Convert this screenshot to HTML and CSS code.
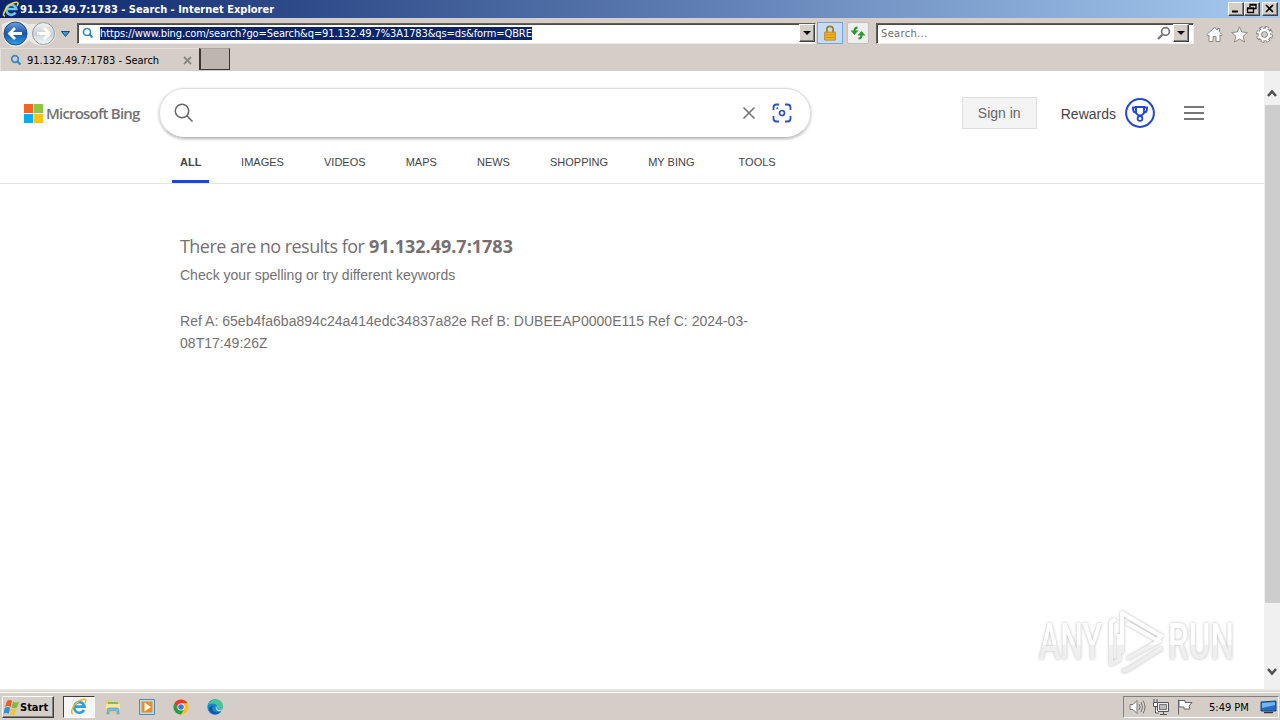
FILE: index.html
```html
<!DOCTYPE html>
<html lang="en">
  <head>
    <meta charset="UTF-8" />
    <title>91.132.49.7:1783 - Search</title>
    <link rel="stylesheet" href="styles.css">
  </head>
  <body>
    <!-- Title bar -->
    <div class="titlebar">
      <svg class="ie-logo" width="18" height="17" viewBox="0 0 18 17">
        <path d="M13.5 11.5a5 5 0 1 1 .7-3.5H5" fill="none" stroke="#6bc5f5" stroke-width="2.7"/>
        <path d="M3 15C-1 15 4 5 11 2c5-2 6 0 4 3" fill="none" stroke="#f2d33c" stroke-width="1.6"/>
      </svg>
      <div class="window-title">91.132.49.7:1783 - Search - Internet Explorer</div>
      <div class="window-buttons">
        <div class="win-button"><svg width="13" height="11"><path d="M3 8.500h6" stroke="#000" stroke-width="2"/></svg></div>
        <div class="win-button"><svg width="13" height="11"><path d="M5 4V1.500h6v4H9M5 2h6M2.500 5.500h6v4h-6zM2 5h7" fill="none" stroke="#000" stroke-width="1.300"/></svg></div>
        <div class="win-button close"><svg width="13" height="11"><path d="M3 2l7 7M10 2L3 9" stroke="#000" stroke-width="1.700"/></svg></div>
      </div>
    </div>

    <!-- Address row -->
    <div class="toolbar">
      <svg class="nav-buttons" width="70" height="27" viewBox="0 0 70 27">
        <defs>
          <linearGradient id="blue" x2="0" y2="1"><stop stop-color="#6e9fd6"/><stop offset=".5" stop-color="#1c55ab"/><stop offset="1" stop-color="#2fa0e4"/></linearGradient>
          <linearGradient id="pale" x2="0" y2="1"><stop stop-color="#f2f3f4"/><stop offset=".5" stop-color="#cbd1d6"/><stop offset="1" stop-color="#f3fafc"/></linearGradient>
        </defs>
        <path d="M2 4Q15-3 28 4h17q10 1 11 10-1 10-12 12-11-1-15-6Q24 27 14 27 1 24 2 4" fill="#ebe9e6"/>
        <circle cx="15.500" cy="13.500" r="11.500" fill="url(#blue)" stroke="#254d82"/>
        <path d="M22 13.500H10M15 8l-5.500 5.500 5.500 5.500" fill="none" stroke="#fff" stroke-width="2.800"/>
        <circle cx="43.500" cy="13.500" r="11" fill="url(#pale)" stroke="#929aa3"/>
        <path d="M37 13.500h12M44 8l5.500 5.500-5.500 5.500" fill="none" stroke="#fff" stroke-width="2.800"/>
        <path d="M61.500 11.500h8l-4 5z" fill="#3a9bd8" stroke="#1d4870"/>
      </svg>
      <div class="address">
        <svg width="13" height="13" viewBox="0 0 13 13"><circle cx="5" cy="5" r="3.500" fill="none" stroke="#3589c6" stroke-width="1.700"/><path d="M7.500 7.500l3 3" stroke="#3589c6" stroke-width="2.200"/></svg>
        <span class="url">https://www.bing.com/search?go=Search&amp;q=91.132.49.7%3A1783&amp;qs=ds&amp;form=QBRE</span>
        <div class="drop"></div>
      </div>
      <div class="lock">
        <svg width="16" height="16" viewBox="0 0 16 18"><path d="M4.500 9V4.500a3.500 3 0 0 1 7 0V9" fill="none" stroke="#a47c24" stroke-width="2"/><path d="M2 8h12v9H2z" fill="#f1b51f" stroke="#ba8319"/><path d="M3 11h10M3 14h10" stroke="#c88a13"/></svg>
      </div>
      <div class="refresh">
        <svg width="16" height="16" viewBox="0 0 16 16"><path d="M7.500 2.500Q4.500 2.500 4.500 6M8.500 13.500q3 0 3-3.500" fill="none" stroke="#299a31" stroke-width="2"/><path d="M.5 5.500h8l-4 4.500zM7.500 10.500h8l-4-4.500z" fill="#299a31"/></svg>
      </div>
      <div class="search-field">
        <span class="placeholder">Search...</span>
        <svg width="14" height="14" viewBox="0 0 14 14"><circle cx="8.500" cy="5.500" r="3.900" fill="none" stroke="#777" stroke-width="1.700"/><path d="M5.500 8.500L1 13" stroke="#777" stroke-width="2.300"/></svg>
        <div class="drop"></div>
      </div>
      <div class="tool-icons">
        <svg width="17" height="17" viewBox="0 0 17 17"><path d="M.8 8.500L8.500 1.500 11.500 4V2.500h2V6l2.700 2.500-1.200 1.500-1-1v6.500h-4v-5h-3v5H3V9L2 10z" fill="#fff" stroke="#8e8a85"/></svg>
        <svg width="17" height="17" viewBox="0 0 17 17"><path d="M8.500.8l2.200 5.200 5.700.5-4.300 3.800 1.400 5.700-5-3-5 3 1.400-5.700L.6 6.500 6.300 6z" fill="#fff" stroke="#8e8a85"/></svg>
        <svg width="17" height="17" viewBox="0 0 17 17"><circle cx="8.500" cy="8.500" r="6.800" fill="none" stroke="#85817c" stroke-width="3.400" stroke-dasharray="3.500 1.840"/><circle cx="8.500" cy="8.500" r="4.600" fill="none" stroke="#85817c" stroke-width="4.400"/><circle cx="8.500" cy="8.500" r="4.600" fill="none" stroke="#fff" stroke-width="2.600"/><circle cx="8.500" cy="8.500" r="6.400" fill="none" stroke="#fff" stroke-width="2.400" stroke-dasharray="1.900 3.127" stroke-dashoffset="-.7"/></svg>
      </div>
    </div>

    <!-- Tabs -->
    <div class="tabs">
      <div class="tab">
        <svg width="13" height="13" viewBox="0 0 13 13"><circle cx="5" cy="5" r="3.300" fill="none" stroke="#3589c6" stroke-width="1.700"/><path d="M7.500 7.500l3 3" stroke="#3589c6" stroke-width="2.200"/></svg>
        <span class="tab-title">91.132.49.7:1783 - Search</span>
        <svg width="9" height="9" viewBox="0 0 9 9"><path d="M1 1l7 7M8 1L1 8" stroke="#8b8783" stroke-width="1.800"/></svg>
      </div>
      <div class="new-tab"></div>
    </div>

    <!-- Page -->
    <div class="viewport">
      <div class="page">
        <div class="header">
          <div class="logo">
            <div class="squares"><i></i><i></i><i></i><i></i></div>
            <span class="logo-text">Microsoft Bing</span>
          </div>
          <div class="searchbox">
            <svg width="20" height="20" viewBox="0 0 20 20"><circle cx="8" cy="8" r="6.700" fill="none" stroke="#666" stroke-width="1.500"/><path d="M12.800 12.800L18.500 18.500" stroke="#666" stroke-width="1.600"/></svg>
            <svg class="clear" width="14" height="14" viewBox="0 0 14 14"><path d="M1.500 1.500l11 11M12.500 1.500l-11 11" stroke="#777" stroke-width="1.700"/></svg>
            <svg class="lens" width="20" height="20" viewBox="0 0 20 20"><path d="M1.500 7V4.500q0-3 3-3H7M13 1.500h2.500q3 0 3 3V7M18.500 13v2.500q0 3-3 3H13M7 18.500H4.500q-3 0-3-3V13" fill="none" stroke="#2b50bd" stroke-width="1.800"/><circle cx="10" cy="10" r="2.500" fill="none" stroke="#2b50bd" stroke-width="1.700"/><circle cx="5.300" cy="5.300" r="1" fill="#2b50bd"/></svg>
          </div>
          <div class="account">
            <div class="signin">Sign in</div>
            <span class="rewards">Rewards</span>
            <svg width="30" height="30" viewBox="0 0 30 30"><circle cx="15" cy="15" r="13.900" fill="#fff" stroke="#2347cf" stroke-width="2"/><path d="M11 9h8v4.500a4 4 0 0 1-8 0zM11 9.500H8v1.500q0 3.500 4 4M19 9.500h3v1.500q0 3.500-4 4M13 17l2 1.500 2-1.500" fill="none" stroke="#2347cf" stroke-width="1.900"/><circle cx="15" cy="20.500" r="2.400" fill="#fff" stroke="#2347cf" stroke-width="1.800"/></svg>
            <div class="burger"></div>
          </div>
        </div>
        <div class="scopes">
          <span class="scope active">ALL</span>
          <span class="scope">IMAGES</span>
          <span class="scope">VIDEOS</span>
          <span class="scope">MAPS</span>
          <span class="scope">NEWS</span>
          <span class="scope">SHOPPING</span>
          <span class="scope">MY BING</span>
          <span class="scope tools">TOOLS</span>
        </div>
        <div class="results">
          <h1><span class="no-results">There are no results for</span> <strong>91.132.49.7:1783</strong></h1>
          <p>Check your spelling or try different keywords</p>
          <p class="ref">Ref A: 65eb4fa6ba894c24a414edc34837a82e Ref B: DUBEEAP0000E115 Ref C: 2024-03-<br>08T17:49:26Z</p>
        </div>
      </div>
      <div class="scrollbar">
        <svg width="16" height="34"><path d="M4 25l4-4.500 4 4.500" fill="none" stroke="#505050" stroke-width="2.500"/></svg>
        <div class="thumb"></div>
        <svg class="down" width="16" height="34"><path d="M4 14l4 4.500 4-4.500" fill="none" stroke="#505050" stroke-width="2.500"/></svg>
      </div>
      <svg class="watermark" width="240" height="76" viewBox="0 0 240 76">
        <defs>
          <linearGradient id="mark" gradientUnits="userSpaceOnUse" x1="0" y1="0" x2="0" y2="68"><stop offset=".52" stop-color="#fff"/><stop offset=".53" stop-color="#f0f0f0"/><stop offset="1" stop-color="#ececec"/></linearGradient>
        </defs>
        <g class="mark-text">
          <text x="3" y="50" textLength="63" lengthAdjust="spacingAndGlyphs">ANY</text>
          <text x="132" y="50" textLength="66" lengthAdjust="spacingAndGlyphs">RUN</text>
        </g>
        <g class="mark-lines">
          <path d="M80 10l-5 3v42l8-4V25M86 44V4l39 23-4 4-30-17M91 50l34-19M86 62l5-1 35-22"/>
        </g>
      </svg>
    </div>

    <!-- Taskbar -->
    <div class="taskbar">
      <div class="start">
        <svg width="18" height="17" viewBox="0 0 18 17"><path d="M4 2q3-2 5 0L7.500 8q-3-2-5.500 0z" fill="#ea5a2a"/><path d="M10 2.500q3 2 6 0l-2 6q-3 1.500-5.500 0z" fill="#83ba38"/><path d="M1.700 9q3-2 5.500 0l-1.500 6q-3-2-5.200 0z" fill="#378fd6"/><path d="M8.200 9.500q3 2 5.500 0l-2 6q-3 1-5 0z" fill="#f5c430"/></svg>
        <span>Start</span>
      </div>
      <div class="task active">
        <svg width="18" height="18" viewBox="0 0 18 18"><path d="M14 12a5.300 5.300 0 1 1 .6-3.400H5" fill="none" stroke="#2e9ee0" stroke-width="2.600"/><path d="M3 16C-1 15 4 5 11 2c5-2 6 0 4 3" fill="none" stroke="#e7b928" stroke-width="1.500"/></svg>
      </div>
      <svg class="task-icon" width="18" height="18" viewBox="0 0 18 18"><path d="M2 4l1-2h5l1 2h6v11H2z" fill="#edcf68"/><path d="M4 4h10v3H4z" fill="#78bd68"/><path d="M2 6h14v8H2z" fill="#f8e49a"/><path d="M3 16v-4q0-2 2-2h8q2 0 2 2v4h-2v-3H5v3z" fill="#75bce5" stroke="#4b9bc8" stroke-width=".6"/></svg>
      <svg class="task-icon" width="18" height="18" viewBox="0 0 18 18"><path d="M1.500 1.500h15v15h-15z" fill="#b8dcf4" stroke="#528bb7"/><path d="M3.500 3.500h11v11h-11z" fill="#f18b1b"/><path d="M6.500 4.500l6.500 4.500-6.500 4.500z" fill="#fff"/></svg>
      <svg class="task-icon" width="18" height="18" viewBox="0 0 18 18"><circle cx="9" cy="9" r="7.500" fill="#fbc116"/><path d="M2.500 5.250A7.500 7.500 0 0 1 15.500 5.250H9L5.800 11z" fill="#e33b2e"/><path d="M2.500 5.250A7.500 7.500 0 0 0 9 16.500l3.200-5.600L9 9l-3.200 1.900z" fill="#289b48"/><circle cx="9" cy="9" r="3.600" fill="#fff"/><circle cx="9" cy="9" r="2.800" fill="#3978e6"/></svg>
      <svg class="task-icon" width="18" height="18" viewBox="0 0 18 18"><circle cx="9" cy="9" r="7.700" fill="#1686d1"/><path d="M2 7C5-1 18 0 16.700 9c-.7 3-6 2.500-6 .5 1-3-2-6-8.700-2.500" fill="#43c795"/><path d="M6 9c0 5 4 7 9 4-4 6-12 3-12-3q3-3 5-2z" fill="#1356a1"/><path d="M10 8c1 5 4 4 6.800 3l-1 2c-4 1-7-1-5.800-5" fill="#d4d0c8"/></svg>
      <div class="tray">
        <svg width="18" height="18" viewBox="0 0 18 18"><path d="M2 6.500h3l4-4v13l-4-4H2z" fill="#fff" stroke="#777"/><path d="M11 6q2 3 0 6M13 4q3 5 0 10M15 2.500q4 6.500 0 13" fill="none" stroke="#77736f"/></svg>
        <svg width="18" height="18" viewBox="0 0 18 18"><path d="M5.500 4.500h11v9h-11zM8 16.500h7M11.500 14v2" fill="#eee" stroke="#555"/><path d="M7.500 6.500h7v5h-7z" fill="#bbb" stroke="#777"/><path d="M2 1v3M5 1v3M1.500 4.500h4v4h-4zM3.500 9v6h3" fill="#fff" stroke="#555"/></svg>
        <svg width="18" height="18" viewBox="0 0 18 18"><path d="M2.500 1.500v15M3 2.500h6v2h7l-3 3.500 1 3H8V9H3z" fill="#fff" stroke="#666"/></svg>
        <span class="clock">5:49 PM</span>
        <svg width="17" height="16" viewBox="0 0 17 16"><path d="M1 3l15-1v10H1z" fill="#246bc5" stroke="#17477f"/><path d="M2 4l13-1v3L2 9z" fill="#71b7ed"/><path d="M4 13.500h9" stroke="#333" stroke-width="1.500"/></svg>
      </div>
    </div>
  </body>
</html>
```
FILE: styles.css
```css
* {
  box-sizing: border-box;
}

body {
  margin: 0;
  width: 1280px;
  height: 720px;
  overflow: hidden;
  display: flex;
  flex-direction: column;
  background: #d4d0c8;
  font-family: "DejaVu Sans Condensed", "DejaVu Sans", sans-serif;
  font-size: 11px;
  color: #000;
}

svg {
  display: block;
  flex-shrink: 0;
}

/* Title bar */
.titlebar {
  height: 18px;
  display: flex;
  align-items: center;
  padding: 0 2px;
  background: linear-gradient(to right, #0a246a, #a6caf0);
}

.window-title {
  color: #fff;
  font-weight: bold;
  white-space: nowrap;
}

.window-buttons {
  display: flex;
  margin-left: auto;
}

.win-button {
  width: 16px;
  height: 14px;
  background: #d4d0c8;
  border: 1px solid;
  border-color: #fff #404040 #404040 #fff;
  box-shadow: inset -1px -1px #808080;
}

.win-button.close {
  margin-left: 2px;
}

/* Address row */
.toolbar {
  height: 30px;
  display: flex;
  align-items: center;
  background: #d5cec8;
}

.nav-buttons {
  margin-top: 1px;
}

.address,
.search-field {
  height: 21px;
  display: flex;
  align-items: center;
  background: #fff;
  border: 1px solid;
  border-color: #635d58 #eee #eee #635d58;
  box-shadow: inset 1px 1px #504a46;
}

.address {
  width: 739px;
  margin-left: 7px;
  padding-left: 4px;
}

.url {
  height: 13px;
  margin-left: 5px;
  line-height: 13px;
  white-space: nowrap;
  background: #0a246a;
  color: #fff;
  letter-spacing: -0.1px;
}

.drop {
  width: 16px;
  height: 18px;
  margin-left: auto;
  display: flex;
  align-items: center;
  justify-content: center;
  background: #d4d0c8;
  border: 1px solid;
  border-color: #fff #404040 #404040 #fff;
  box-shadow: inset -1px -1px #808080;
}

.drop::after {
  content: "";
  border: 4px solid transparent;
  border-top-color: #000;
  border-bottom: 0;
}

.lock {
  width: 26px;
  height: 22px;
  margin-left: 1px;
  padding: 2px 4px;
  background: #c5dcf7;
  border: 1px solid #76a6df;
}

.refresh {
  width: 22px;
  height: 22px;
  margin-left: 4px;
  padding: 2px;
  background: #f0efed;
  border: 1px solid #c4bfba;
  border-radius: 2px;
}

.search-field {
  width: 318px;
  margin-left: 7px;
  padding: 0 4px;
}

.placeholder {
  color: #6d6d6d;
  letter-spacing: 0.35px;
}

.search-field svg {
  margin-left: auto;
}

.search-field .drop {
  margin-left: 2px;
}

.tool-icons {
  display: flex;
  gap: 8px;
  margin: 3px 0 0 12px;
}

/* Tabs */
.tabs {
  height: 23px;
  display: flex;
  background: #d5cec8;
}

.tab {
  width: 199px;
  display: flex;
  align-items: center;
  padding: 0 7px 0 9px;
  border: 1px solid #e5e0dc;
  border-width: 1px 0 0 1px;
}

.tab-title {
  margin-left: 4px;
  flex: 1;
  white-space: nowrap;
}

.new-tab {
  width: 31px;
  height: 22px;
  background: #bdb5b0;
  border: 1px solid #393633;
  border-left-width: 2px;
  border-top-color: #aaa39f;
}

/* Page */
.viewport {
  height: 618px;
  display: flex;
  position: relative;
  background: #fff;
}

.page {
  flex: 1;
  font-family: "Liberation Sans", Arial, sans-serif;
}

.header {
  height: 67px;
  display: flex;
  padding: 17px 60px 0 24px;
}

.logo {
  width: 135px;
  height: 50px;
  display: flex;
  align-items: center;
}

.squares {
  display: grid;
  grid-template-columns: 9px 9px;
  gap: 1px;
}

.squares i {
  height: 9px;
  background: #f26522;
}

.squares i:nth-child(2) {
  background: #8dc63f;
}

.squares i:nth-child(3) {
  background: #00aeef;
}

.squares i:nth-child(4) {
  background: #ffc20e;
}

.logo-text {
  margin-left: 3px;
  font-family: "Open Sans", sans-serif;
  font-size: 15px;
  font-weight: 600;
  color: #737373;
  white-space: nowrap;
  letter-spacing: -0.8px;
}

.searchbox {
  width: 652px;
  height: 50px;
  display: flex;
  align-items: center;
  padding: 0 18px 0 14px;
  border: 1px solid #ddd;
  border-bottom-color: #bbb;
  border-radius: 25px;
  box-shadow: 0 1px 3px rgba(0, 0, 0, 0.3);
}

.clear {
  margin-left: auto;
}

.lens {
  margin-left: 16px;
}

.account {
  height: 50px;
  display: flex;
  align-items: center;
  margin-left: auto;
}

.signin {
  width: 75px;
  height: 32px;
  line-height: 30px;
  text-align: center;
  font-size: 14px;
  color: #666;
  background: #f4f4f4;
  border: 1px solid #ddd;
}

.rewards {
  margin: 2px 9px 0 24px;
  font-size: 14px;
  color: #444;
}

.burger {
  width: 20px;
  height: 14px;
  margin-left: 29px;
  border: solid #777;
  border-width: 2px 0;
  background: linear-gradient(#777, #777) 0 4px / 20px 2px no-repeat;
}

.scopes {
  height: 46px;
  display: flex;
  gap: 40.1px;
  padding-left: 172px;
  line-height: 48px;
  color: #444;
  border-bottom: 1px solid #e5e5e5;
}

.scope.active {
  width: 37px;
  height: 45px;
  margin-right: -8px;
  padding-left: 8px;
  font-weight: bold;
  border-bottom: 3px solid #174ae4;
}

.scope.tools {
  margin-left: 4px;
}

/* Results */
.results {
  padding: 49px 0 0 180px;
  font-size: 14px;
  line-height: 22px;
  color: #767070;
}

.results h1 {
  margin: 0;
  font-family: "Open Sans", sans-serif;
  font-size: 18px;
  font-weight: normal;
  line-height: 26px;
}

.no-results {
  letter-spacing: -0.55px;
}

.results p {
  margin: 5px 0 0;
}

.results .ref {
  margin-top: 24px;
  letter-spacing: 0.03px;
}

.scrollbar {
  width: 16px;
  display: flex;
  flex-direction: column;
  background: #f0f0f0;
}

.thumb {
  height: 498px;
  margin: 0 0 0 1px;
  background: #cdcdcd;
}

.down {
  margin-top: auto;
}

/* Watermark over the page */
.watermark {
  position: absolute;
  left: 1036px;
  top: 538px;
  filter: drop-shadow(0 0 1.5px rgba(0, 0, 0, 0.28));
}

.mark-text {
  font-family: "Roboto", sans-serif;
  font-size: 50px;
  font-weight: 500;
  fill: url(#mark);
}

.mark-lines {
  fill: none;
  stroke: url(#mark);
  stroke-width: 4px;
  stroke-linejoin: round;
}

/* Taskbar */
.taskbar {
  height: 31px;
  display: flex;
  align-items: center;
  padding: 5px 1px 0 2px;
  background: linear-gradient(#e9e6e1 2px, #d4d0c8 2px, #d4d0c8 3px, #fff 3px, #fff 4px, #d5cec8 4px);
}

.start {
  width: 52px;
  height: 22px;
  display: flex;
  align-items: center;
  font-weight: bold;
  border: 1px solid;
  border-color: #fff #404040 #404040 #fff;
  box-shadow: inset -1px -1px #808080;
}

.start span {
  margin-left: -1px;
}

.task.active {
  width: 32px;
  height: 22px;
  margin: 0 9px;
  padding: 1px 6px;
  background: #f7f6f4;
  border: 1px solid;
  border-color: #404040 #fff #fff #404040;
}

.task-icon {
  margin-right: 16px;
}

.tray {
  width: 156px;
  height: 22px;
  display: flex;
  align-items: center;
  gap: 6px;
  margin-left: auto;
  padding: 0 2px 0 4px;
  border: 1px solid;
  border-color: #808080 #fff #fff #808080;
}

.clock {
  margin: 0 5px 0 9px;
  white-space: nowrap;
}
```
